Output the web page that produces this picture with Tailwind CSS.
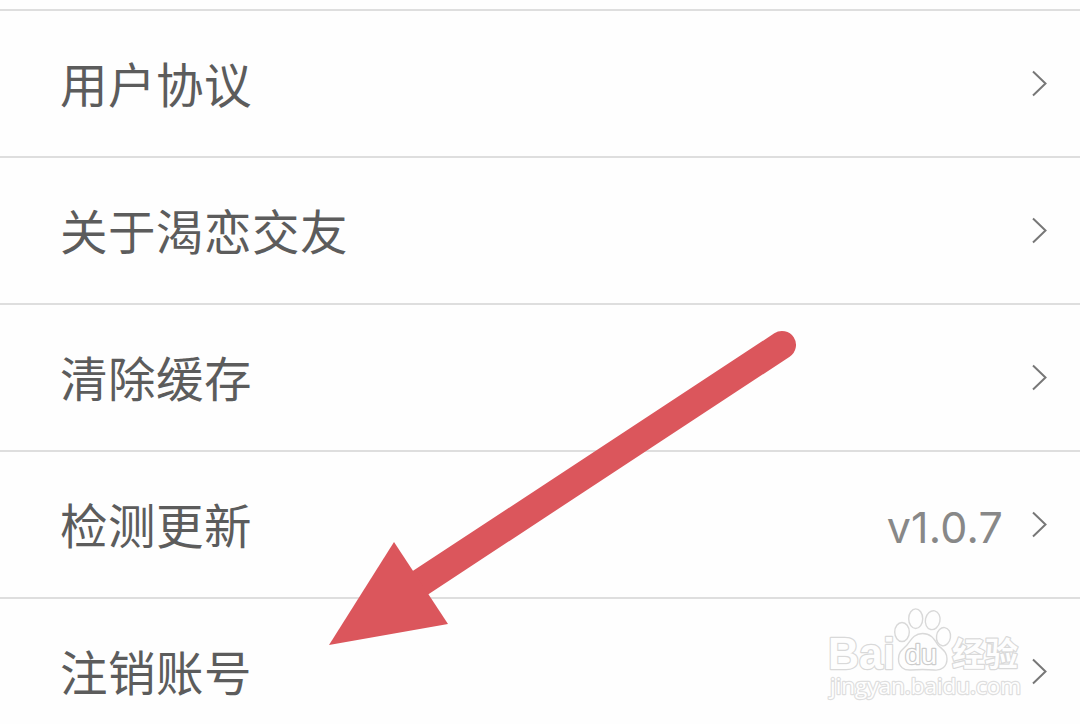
<!DOCTYPE html>
<html lang="zh-CN">
<head>
  <meta charset="UTF-8" />
  <meta name="viewport" content="width=device-width, initial-scale=1.0" />
  <title>设置</title>
  <script src="https://cdn.jsdelivr.net/npm/@tailwindcss/browser@4"></script>
</head>
<body class="relative h-[724px] overflow-hidden bg-[#fefefe] pt-[9px] font-['Noto_Sans_CJK_SC',sans-serif] text-[47.5px] tracking-[0.5px] text-[#5c5c5c]">

  <!-- Settings list -->
  <ul>
    <li class="flex h-[147px] items-center border-t-2 border-[#dedede] pr-8 pl-[60px]">
      <span class="flex-1 pb-px leading-none">用户协议</span>
      <svg class="h-7 w-4" viewBox="0 0 16 28" fill="none" stroke="#777" stroke-width="2"><path d="M1 1.5 L13.5 13.5 L1 25.5" /></svg>
    </li>
    <li class="flex h-[147px] items-center border-t-2 border-[#dedede] pr-8 pl-[60px]">
      <span class="flex-1 pb-px leading-none">关于渴恋交友</span>
      <svg class="h-7 w-4" viewBox="0 0 16 28" fill="none" stroke="#777" stroke-width="2"><path d="M1 1.5 L13.5 13.5 L1 25.5" /></svg>
    </li>
    <li class="flex h-[147px] items-center border-t-2 border-[#dedede] pr-8 pl-[60px]">
      <span class="flex-1 pb-px leading-none">清除缓存</span>
      <svg class="h-7 w-4" viewBox="0 0 16 28" fill="none" stroke="#777" stroke-width="2"><path d="M1 1.5 L13.5 13.5 L1 25.5" /></svg>
    </li>
    <li class="flex h-[147px] items-center border-t-2 border-[#dedede] pr-8 pl-[60px]">
      <span class="flex-1 pb-px leading-none">检测更新</span>
      <span class="mr-[29px] pt-1.5 font-['Inter',sans-serif] text-[43px] leading-none tracking-[0.2px] text-[#888]">v1.0.7</span>
      <svg class="h-7 w-4" viewBox="0 0 16 28" fill="none" stroke="#777" stroke-width="2"><path d="M1 1.5 L13.5 13.5 L1 25.5" /></svg>
    </li>
    <li class="flex h-[147px] items-center border-t-2 border-[#dedede] pr-8 pl-[60px]">
      <span class="flex-1 pb-px leading-none">注销账号</span>
      <svg class="h-7 w-4" viewBox="0 0 16 28" fill="none" stroke="#777" stroke-width="2"><path d="M1 1.5 L13.5 13.5 L1 25.5" /></svg>
    </li>
  </ul>

  <!-- Arrow pointing at the last row -->
  <svg class="absolute top-0 left-0 h-[724px] w-[1080px]" viewBox="0 0 1080 724">
    <path d="M420 583 L782 345" stroke="#db565c" stroke-width="28" stroke-linecap="round" />
    <path d="M329 645 L394 542 L448 624 Z" fill="#db565c" />
  </svg>

  <!-- Watermark -->
  <svg class="absolute top-[600px] left-[820px] h-[110px] w-[210px] overflow-visible tracking-normal" viewBox="820 600 210 110" fill="#fefefe" stroke="#d9d9d9" stroke-width="1.4" stroke-linejoin="round">
    <g paint-order="stroke" stroke-width="2.4">
      <text x="828" y="669" class="font-['Liberation_Sans',sans-serif] text-[44px] font-bold" textLength="67" lengthAdjust="spacingAndGlyphs">Bai</text>
      <text x="952" y="666" class="font-['Noto_Sans_CJK_SC',sans-serif] text-[33px] font-bold" textLength="66" lengthAdjust="spacingAndGlyphs">经验</text>
      <text x="830" y="694" stroke="#dedede" class="font-['Open_Sans',sans-serif] text-[22px]" textLength="191" lengthAdjust="spacingAndGlyphs">jingyan.baidu.com</text>
    </g>
    <ellipse cx="902" cy="632" rx="7.3" ry="9.5" />
    <ellipse cx="915.7" cy="618.7" rx="7" ry="9.8" />
    <ellipse cx="932.7" cy="620.2" rx="7.3" ry="9.5" transform="rotate(12 932.7 620.2)" />
    <ellipse cx="943.5" cy="636.7" rx="7" ry="9.2" transform="rotate(8 943.5 636.7)" />
    <path d="M922.5 633.5 C914 633.5 911 640 907 645 C902 650 898.5 652 898.5 659 C898.5 667 904 670.5 911 670 C917 669.5 928 669.5 934 670 C942 671 947 666 947 659 C947 652 943 650 938 645 C934 639 931 633.5 922.5 633.5 Z" />
    <text x="905" y="664" class="font-['Liberation_Sans',sans-serif] text-[27px]" textLength="32" lengthAdjust="spacingAndGlyphs" paint-order="stroke" stroke-width="2.4" stroke="#cccccc">du</text>
  </svg>

</body>
</html>
